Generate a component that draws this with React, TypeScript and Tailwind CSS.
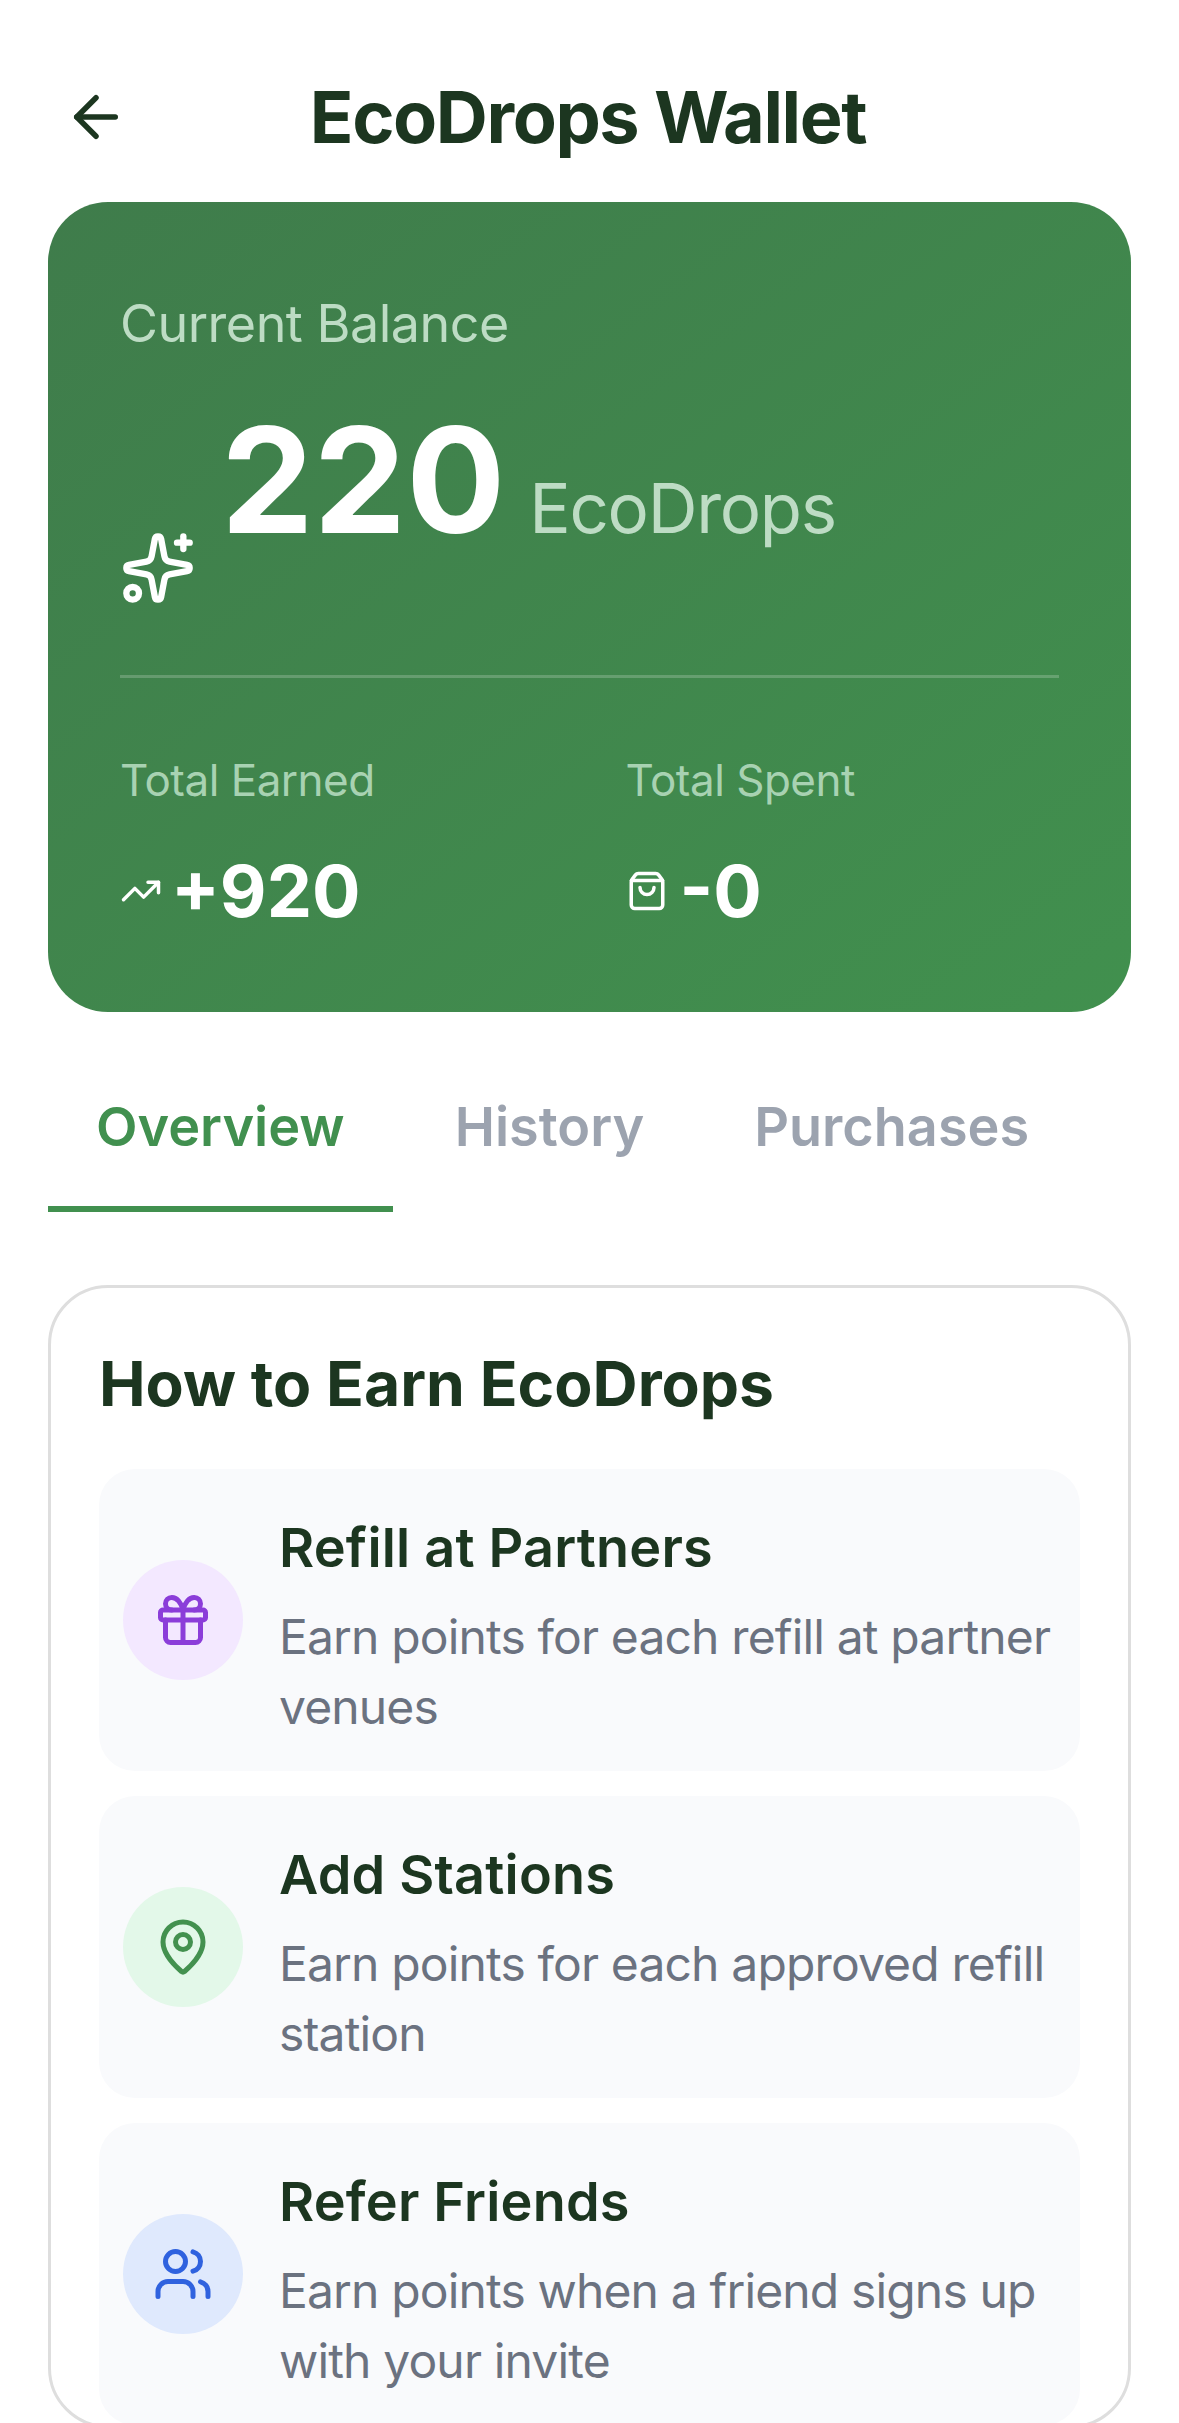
import { ArrowLeft, Gift, MapPin, ShoppingBag, Sparkles, TrendingUp, Users } from "lucide-react"

const earnWays = [
  {
    title: "Refill at Partners",
    text: "Earn points for each refill at partner venues",
    Icon: Gift,
    circle: "bg-[#f3e8ff]",
    color: "text-[#8b3dd9]",
  },
  {
    title: "Add Stations",
    text: "Earn points for each approved refill station",
    Icon: MapPin,
    circle: "bg-[#e3f8e9]",
    color: "text-[#43914f]",
  },
  {
    title: "Refer Friends",
    text: "Earn points when a friend signs up with your invite",
    Icon: Users,
    circle: "bg-[#dfe9fd]",
    color: "text-[#2f62df]",
  },
]

export default function App() {
  return (
    <div className="h-[2423px] w-[1179px] overflow-hidden bg-white font-['Inter',sans-serif] text-[#1c3620]">
      {/* Header */}
      <header className="relative flex h-[202px] items-start justify-center pr-[3px] pt-[72px]">
        <button className="absolute left-[63px] top-[84px]">
          <ArrowLeft size={66} strokeWidth={2} className="text-[#1c3620]" />
        </button>
        <h1 className="text-[72px] font-bold leading-[90px] tracking-[-1.4px]">EcoDrops Wallet</h1>
      </header>

      <main className="px-[48px]">
        {/* Balance card */}
        <section className="rounded-[60px] bg-gradient-to-br from-[#3f7c4b] to-[#41904e] px-[72px] pb-[79px] pt-[80px]">
          <p className="text-[52px] leading-[84px] tracking-[-0.5px] text-[#bddcc4]">Current Balance</p>
          <div className="mt-[42px] flex h-[267px] items-start gap-[25px]">
            <Sparkles size={76} strokeWidth={2} className="mt-[122px] shrink-0 text-white" />
            <div className="flex items-baseline gap-[24px]">
              <span className="text-[147px] font-bold leading-[144px] text-white">220</span>
              <span className="text-[69px] leading-[90px] tracking-[-1.3px] text-[#bddcc4]">EcoDrops</span>
            </div>
          </div>
          <div className="h-[3px] bg-white/20" />
          <div className="mt-[72px] grid grid-cols-2 gap-x-[72px]">
            <div>
              <p className="text-[44px] leading-[60px] tracking-[-0.5px] text-[#a8d2b2]">Total Earned</p>
              <div className="mt-[39px] flex items-center gap-[9px]">
                <TrendingUp size={42} strokeWidth={2} className="text-white" />
                <span className="text-[72px] font-bold leading-[84px] text-white">+920</span>
              </div>
            </div>
            <div>
              <p className="text-[44px] leading-[60px] tracking-[-0.5px] text-[#a8d2b2]">Total Spent</p>
              <div className="mt-[39px] flex items-center gap-[12px]">
                <ShoppingBag size={42} strokeWidth={2} className="text-white" />
                <span className="text-[72px] font-bold leading-[84px] text-white">-0</span>
              </div>
            </div>
          </div>
        </section>

        {/* Tabs */}
        <nav className="mt-[48px] flex gap-[14px] text-[54px] font-semibold leading-[84px] text-[#9ca3af]">
          <button className="border-b-[6px] border-[#41904f] px-[48px] pb-[37px] pt-[25px] text-[#41904f]">Overview</button>
          <button className="border-b-[6px] border-transparent px-[48px] pb-[37px] pt-[25px]">History</button>
          <button className="border-b-[6px] border-transparent px-[48px] pb-[37px] pt-[25px]">Purchases</button>
        </nav>

        {/* How to earn */}
        <section className="mt-[73px] rounded-[60px] border-[3px] border-[#dedede] px-[48px] pt-[48px]">
          <h2 className="text-[62.4px] font-bold leading-[96px]">How to Earn EcoDrops</h2>
          <div className="mt-[37px] flex flex-col gap-[25px]">
            {earnWays.map(({ title, text, Icon, circle, color }) => (
              <div key={title} className="flex items-center gap-[36px] rounded-[36px] bg-[#f9fafc] px-[24px] py-[30px]">
                <div className={`flex h-[120px] w-[120px] shrink-0 items-center justify-center rounded-full ${circle}`}>
                  <Icon size={60} strokeWidth={2} className={color} />
                </div>
                <div className="min-w-0 pt-[6px]">
                  <h3 className="text-[54px] font-semibold leading-[86px] tracking-[0.2px]">{title}</h3>
                  <p className="mt-[11px] text-[48px] leading-[69.5px] tracking-[-0.85px] text-[#6b7280]">{text}</p>
                </div>
              </div>
            ))}
          </div>
        </section>
      </main>
    </div>
  )
}
